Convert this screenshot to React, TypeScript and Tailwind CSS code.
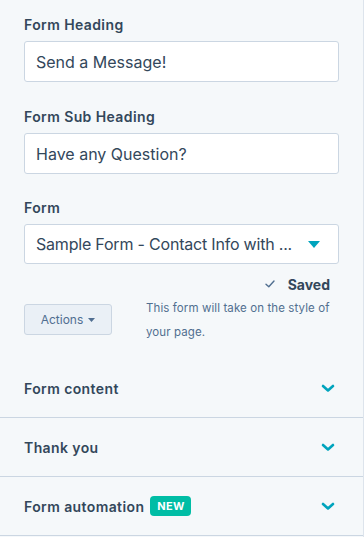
import React from 'react';

function Chevron() {
    return (
        <svg width="14" height="9" viewBox="0 0 14 9" fill="none">
            <path d="M2 2l5 4.5L12 2" stroke="#00a4bd" strokeWidth="2.6" strokeLinecap="round" strokeLinejoin="round" />
        </svg>
    );
}

function AccordionRow({ title, badge }: { title: string; badge?: string }) {
    return (
        <div className="h-[59px] border-b border-[#cbd6e2] flex items-center justify-between pl-6 pr-[28px]">
            <div className="flex items-center gap-[6px]">
                <span className="text-[14px] font-semibold tracking-[0.4px] text-[#33475b]">{title}</span>
                {badge && (
                    <span className="h-[20px] w-[41px] rounded-[4px] bg-[#00bda5] text-white text-[11px] font-bold flex items-center justify-center tracking-wide">
                        {badge}
                    </span>
                )}
            </div>
            <Chevron />
        </div>
    );
}

export default function App() {
    return (
        <div className="w-[364px] h-[537px] overflow-hidden bg-[#f5f8fa] border-r border-[#dde4ec] text-[#33475b]" style={{ fontFamily: 'Inter, "Noto Sans", sans-serif' }}>
            {/* FIELDS */}
            <div className="px-6 pt-[15px]">
                <div className="text-[14px] font-semibold tracking-[0.4px] leading-5 mb-[6px]">Form Heading</div>
                <div className="h-[41px] bg-white border border-[#cbd6e2] rounded-[3px] flex items-center px-[11px] text-[16px]">Send a Message!</div>

                <div className="text-[14px] font-semibold tracking-[0.4px] leading-5 mt-[25px] mb-[6px]">Form Sub Heading</div>
                <div className="h-[41px] bg-white border border-[#cbd6e2] rounded-[3px] flex items-center px-[11px] text-[16px]">Have any Question?</div>

                <div className="text-[14px] font-semibold tracking-[0.4px] leading-5 mt-[24px] mb-[6px]">Form</div>
                <div className="h-[40px] bg-white border border-[#cbd6e2] rounded-[3px] flex items-center justify-between pl-[11px] pr-[18px] text-[16px]">
                    <span className="whitespace-nowrap tracking-[-0.2px]">Sample Form - Contact Info with ...</span>
                    <svg width="12" height="7" viewBox="0 0 12 7" className="shrink-0 ml-2">
                        <path d="M0 0h12L6 7z" fill="#00a4bd" />
                    </svg>
                </div>

                {/* SAVED */}
                <div className="h-[20px] mt-[10px] flex items-center justify-end gap-[13px] pr-[9px]">
                    <svg width="10" height="8" viewBox="0 0 10 8" fill="none">
                        <path d="M1 4.2l2.8 2.6L9 1" stroke="#516f90" strokeWidth="1.4" strokeLinecap="round" strokeLinejoin="round" />
                    </svg>
                    <span className="text-[14px] font-bold">Saved</span>
                </div>

                {/* ACTIONS */}
                <div className="flex items-start mt-[2px]">
                    <button className="mt-[8px] w-[88px] h-[31px] shrink-0 bg-[#eaf0f6] border border-[#cbd6e2] rounded-[3px] flex items-center justify-center gap-[5px] text-[12px] text-[#506e91]">
                        Actions
                        <svg width="7" height="4" viewBox="0 0 7 4">
                            <path d="M0 0h7L3.5 4z" fill="#506e91" />
                        </svg>
                    </button>
                    <p className="ml-[34px] text-[11.5px] tracking-[0.1px] leading-[24px] text-[#516f90] w-[193px]">This form will take on the style of your page.</p>
                </div>
            </div>

            {/* ACCORDION */}
            <div className="mt-[15px]">
                <AccordionRow title="Form content" />
                <AccordionRow title="Thank you" />
                <AccordionRow title="Form automation" badge="NEW" />
            </div>
        </div>
    );
}
